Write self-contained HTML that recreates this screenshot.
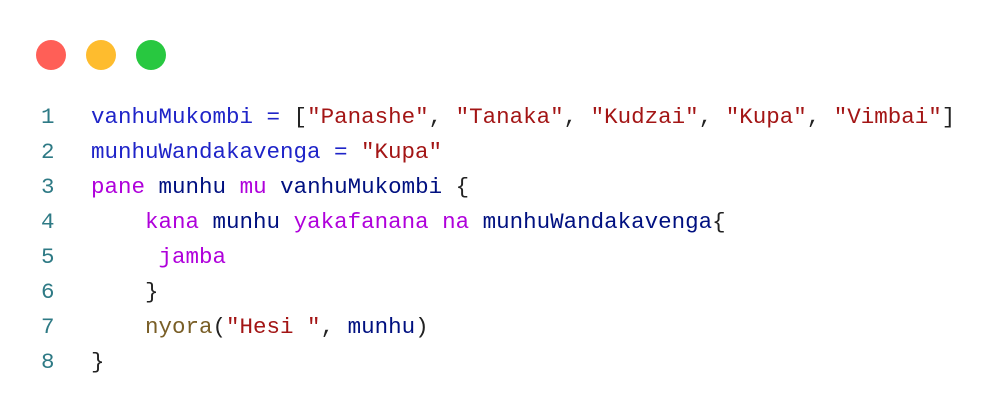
<!DOCTYPE html>
<html><head><style>
body{margin:0;width:996px;height:420px;background:#fff;overflow:hidden;}
.d{position:absolute;top:40px;width:30px;height:30px;border-radius:50%;}
pre{position:absolute;left:0;top:100px;margin:0;font-family:"Liberation Mono",monospace;font-size:22.5px;line-height:35px;color:#222;}
.n{display:inline-block;width:91px;text-align:left;padding-left:0;color:#2e7a85;}
.n b{font-weight:normal;margin-left:41px;}
.v{color:#1f24c8}.s{color:#a31515}.k{color:#af00db}.i{color:#001080}.f{color:#795e26}
</style></head><body>
<div class="d" style="left:36px;background:#ff5f57"></div>
<div class="d" style="left:86px;background:#febc2e"></div>
<div class="d" style="left:136px;background:#28c840"></div>
<pre><span class="n"><b>1</b></span><span class="v">vanhuMukombi = </span>[<span class="s">"Panashe"</span>, <span class="s">"Tanaka"</span>, <span class="s">"Kudzai"</span>, <span class="s">"Kupa"</span>, <span class="s">"Vimbai"</span>]
<span class="n"><b>2</b></span><span class="v">munhuWandakavenga = </span><span class="s">"Kupa"</span>
<span class="n"><b>3</b></span><span class="k">pane</span> <span class="i">munhu</span> <span class="k">mu</span> <span class="i">vanhuMukombi</span> {
<span class="n"><b>4</b></span>    <span class="k">kana</span> <span class="i">munhu</span> <span class="k">yakafanana na</span> <span class="i">munhuWandakavenga</span>{
<span class="n"><b>5</b></span>     <span class="k">jamba</span>
<span class="n"><b>6</b></span>    }
<span class="n"><b>7</b></span>    <span class="f">nyora</span>(<span class="s">"Hesi "</span>, <span class="i">munhu</span>)
<span class="n"><b>8</b></span>}</pre>
</body></html>
